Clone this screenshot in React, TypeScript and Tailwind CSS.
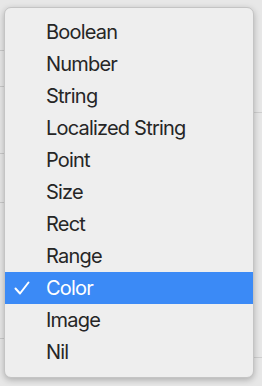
import React from "react";

const items = [
  "Boolean",
  "Number",
  "String",
  "Localized String",
  "Point",
  "Size",
  "Rect",
  "Range",
  "Color",
  "Image",
  "Nil",
];

const selected = "Color";

const Check = () => (
  <svg width="16" height="14" viewBox="0 0 16 14" fill="none">
    <path
      d="M1.5 7.5 L6 12.5 L14.5 1.5"
      stroke="white"
      strokeWidth="2"
      strokeLinecap="round"
      strokeLinejoin="round"
    />
  </svg>
);

export default function App() {
  return (
    <div className="relative w-[262px] h-[386px] overflow-hidden bg-[#e7e7e7] font-['Inter',sans-serif]">
      {/* bits of the window behind the menu */}
      <div className="absolute left-0 top-[50px] w-[6px] h-px bg-[#c9c9c9]" />
      <div className="absolute left-0 top-[86px] w-[6px] h-px bg-[#c9c9c9]" />
      <div className="absolute left-0 top-[153px] w-[6px] h-px bg-[#c9c9c9]" />
      <div className="absolute left-0 top-[202px] w-[6px] h-px bg-[#c9c9c9]" />
      <div className="absolute left-0 top-[338px] w-[10px] h-px bg-[#c9c9c9]" />
      <div className="absolute right-0 top-[112px] w-[10px] h-px bg-[#cfcfcf]" />
      <div className="absolute right-0 top-[357px] w-[10px] h-px bg-[#cfcfcf]" />

      <div className="pt-[7px] pl-[4px]">
        <div className="relative w-[250px] rounded-[7px] bg-[#eeeeee] pt-[8px] pb-[9px] border border-[#c4c4c4] shadow-[0_2px_6px_rgba(0,0,0,0.25)]">
          {items.map((item) => {
            const active = item === selected;
            return (
              <div
                key={item}
                className={`flex items-center h-[32px] text-[20px] tracking-[-0.8px] ${
                  active ? "bg-[#3b8af6] text-white" : "text-[#262626]"
                }`}
              >
                <div className="w-[41px] flex pl-[9px]">
                  {active && <Check />}
                </div>
                <span className="leading-none">{item}</span>
              </div>
            );
          })}
        </div>
      </div>
    </div>
  );
}
